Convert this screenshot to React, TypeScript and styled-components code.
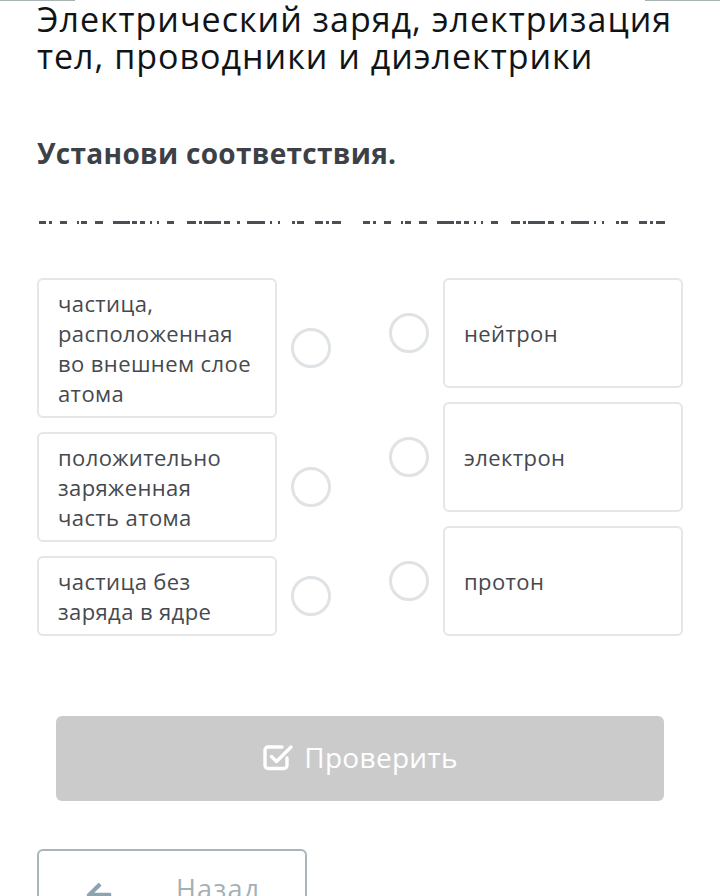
import styled, { createGlobalStyle } from 'styled-components';
import { FaArrowLeft } from 'react-icons/fa';

const GlobalStyle = createGlobalStyle`
  html, body {
    margin: 0;
    padding: 0;
    background: #ffffff;
    font-family: 'Open Sans', 'Noto Sans', sans-serif;
  }
`;

const Page = styled.div`
  display: flex;
  flex-direction: column;
  padding: 0 37px;
  min-height: 896px;
  box-sizing: border-box;
`;

const TopEdge = styled.div`
  display: flex;
  justify-content: space-between;
  margin: 0 -37px;
  height: 1px;
`;

const EdgeBar = styled.span`
  display: block;
  width: 75px;
  height: 1px;
  background: #a9b3b3;
`;

const Title = styled.h1`
  margin: 0;
  font-size: 34px;
  line-height: 37px;
  font-weight: 400;
  letter-spacing: 1px;
  color: #111417;
`;

const Task = styled.h2`
  margin: 62px 0 0;
  font-size: 28px;
  line-height: 32px;
  font-weight: 700;
  letter-spacing: 0.3px;
  color: #3c4047;
`;

const Hidden = styled.svg`
  display: block;
  margin-top: 52px;
`;

const Board = styled.div`
  display: grid;
  grid-template-columns: 1fr 1fr;
  column-gap: 58px;
  margin-top: 54px;
`;

const Column = styled.div`
  display: flex;
  flex-direction: column;
  gap: 14px;
`;

const Row = styled.div<{ $grow?: boolean }>`
  display: flex;
  align-items: center;
  gap: 14px;
  flex: ${({ $grow }) => ($grow ? 1 : 'none')};
`;

const Card = styled.div`
  flex: 1;
  align-self: stretch;
  display: flex;
  align-items: center;
  box-sizing: border-box;
  min-height: 80px;
  padding: 8px 19px;
  border: 2px solid #e4e6e8;
  border-radius: 6px;
  font-size: 22px;
  line-height: 30px;
  letter-spacing: 0.4px;
  color: #45494e;
`;

const Dot = styled.span`
  flex: none;
  width: 40px;
  height: 40px;
  box-sizing: border-box;
  border: 3px solid #dfe3e6;
  border-radius: 50%;
  background: #fff;
`;

const CheckButton = styled.button`
  display: flex;
  align-items: center;
  justify-content: center;
  gap: 10px;
  margin: 80px 19px 0;
  height: 85px;
  border: none;
  border-radius: 6px;
  background: #cbcbcb;
  color: #ffffff;
  font-family: inherit;
  font-size: 28px;
  letter-spacing: 0.3px;
  padding: 0 0 4px;
`;

const BackButton = styled.button`
  display: flex;
  align-items: flex-start;
  margin-top: 48px;
  width: 270px;
  height: 80px;
  box-sizing: border-box;
  padding: 20px 0 0 46px;
  background: #fff;
  border: 2px solid #aab5ba;
  border-radius: 6px;
  font-family: inherit;
  font-size: 27px;
  line-height: 36px;
  letter-spacing: 1.2px;
  color: #a3b0b6;
  gap: 63px;

  svg {
    margin-top: 10px;
    color: #8ea3b0;
  }
`;

const segments: [number, number][] = [
  [0, 7], [10, 3], [21, 7], [38, 2], [42, 6], [56, 8],
  [74, 17], [93, 5], [101, 5], [111, 2], [118, 2], [128, 7],
  [148, 9], [160, 3], [165, 17], [185, 6], [198, 3], [208, 18],
  [231, 2], [239, 2], [253, 3], [258, 7], [276, 8], [287, 3], [293, 9],
];

const lefts = [
  'частица, расположенная во внешнем слое атома',
  'положительно заряженная часть атома',
  'частица без заряда в ядре',
];

const rights = ['нейтрон', 'электрон', 'протон'];

const CheckIcon = () => (
  <svg width="32" height="30" viewBox="0 0 32 30" fill="none" stroke="#fff" strokeWidth="3.4" strokeLinecap="round" strokeLinejoin="round">
    <path d="M25 16v7.5a3 3 0 0 1-3 3H6a3 3 0 0 1-3-3V8a3 3 0 0 1 3-3h14" />
    <path d="M9.5 14.5l5 5L29 5" />
  </svg>
);

export default function App() {
  return (
    <>
      <GlobalStyle />
      <Page>
        <TopEdge>
          <EdgeBar />
          <EdgeBar />
        </TopEdge>
        <Title>Электрический заряд, электризация тел, проводники и диэлектрики</Title>
        <Task>Установи соответствия.</Task>
        <Hidden width="646" height="3" viewBox="0 0 646 3">
          {[2, 326].map((off) =>
            segments.map(([x, w]) => (
              <rect key={`${off}-${x}`} x={off + x} y="0" width={w} height="3" fill="#4a4e55" />
            ))
          )}
        </Hidden>
        <Board>
          <Column>
            {lefts.map((t) => (
              <Row key={t}>
                <Card>{t}</Card>
                <Dot />
              </Row>
            ))}
          </Column>
          <Column>
            {rights.map((t) => (
              <Row key={t} $grow>
                <Dot />
                <Card>{t}</Card>
              </Row>
            ))}
          </Column>
        </Board>
        <CheckButton>
          <CheckIcon />
          Проверить
        </CheckButton>
        <BackButton>
          <FaArrowLeft size={28} />
          Назад
        </BackButton>
      </Page>
    </>
  );
}
